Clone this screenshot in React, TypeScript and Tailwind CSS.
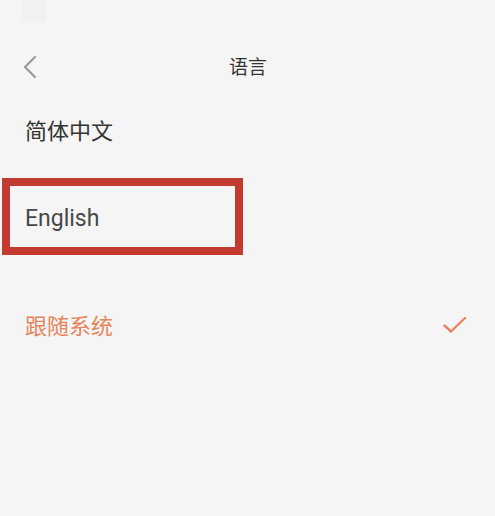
import React from 'react';

const FONT = { fontFamily: '"Noto Sans CJK SC", "Noto Sans", sans-serif' };

export default function App() {
  return (
    <div className="w-[495px] h-[516px] bg-[#f5f5f5] flex flex-col" style={FONT}>
      <div className="h-[21px] pl-[21px]">
        <div className="w-[25px] h-[21px] bg-[#f1f1f1]" />
      </div>

      <div className="relative h-[92px] flex items-center justify-center">
        <svg
          className="absolute left-[21px] top-[34px]"
          width="18"
          height="24"
          viewBox="0 0 18 24"
          fill="none"
        >
          <path d="M14 2 L4 12 L14 22" stroke="#9a9a9a" strokeWidth="2.2" strokeLinecap="round" strokeLinejoin="round" />
        </svg>
        <span className="text-[19px] text-[#333] leading-none pl-[1px] pb-[4px]">语言</span>
      </div>

      <div className="h-[32px] flex items-center pl-[25px]">
        <span className="text-[22px] text-[#333] leading-none">简体中文</span>
      </div>

      <div className="mt-[33px] ml-[2px] w-[241px] h-[77px] border-[8px] border-[#c33b30] flex items-center pl-[15px]">
        <span
          className="text-[23px] text-[#474747] leading-none pt-[4px]"
          style={{ fontFamily: '"Roboto", "Noto Sans", sans-serif' }}
        >
          English
        </span>
      </div>

      <div className="mt-[49px] h-[40px] flex items-center justify-between pl-[25px] pr-[28px]">
        <span className="text-[22px] text-[#e8845c] leading-none">跟随系统</span>
        <svg className="mt-[2px]" width="24" height="18" viewBox="0 0 24 18" fill="none">
          <path d="M1.5 9.5 L8 15.5 L22 2" stroke="#e8845c" strokeWidth="2.4" strokeLinecap="round" strokeLinejoin="round" />
        </svg>
      </div>
    </div>
  );
}
